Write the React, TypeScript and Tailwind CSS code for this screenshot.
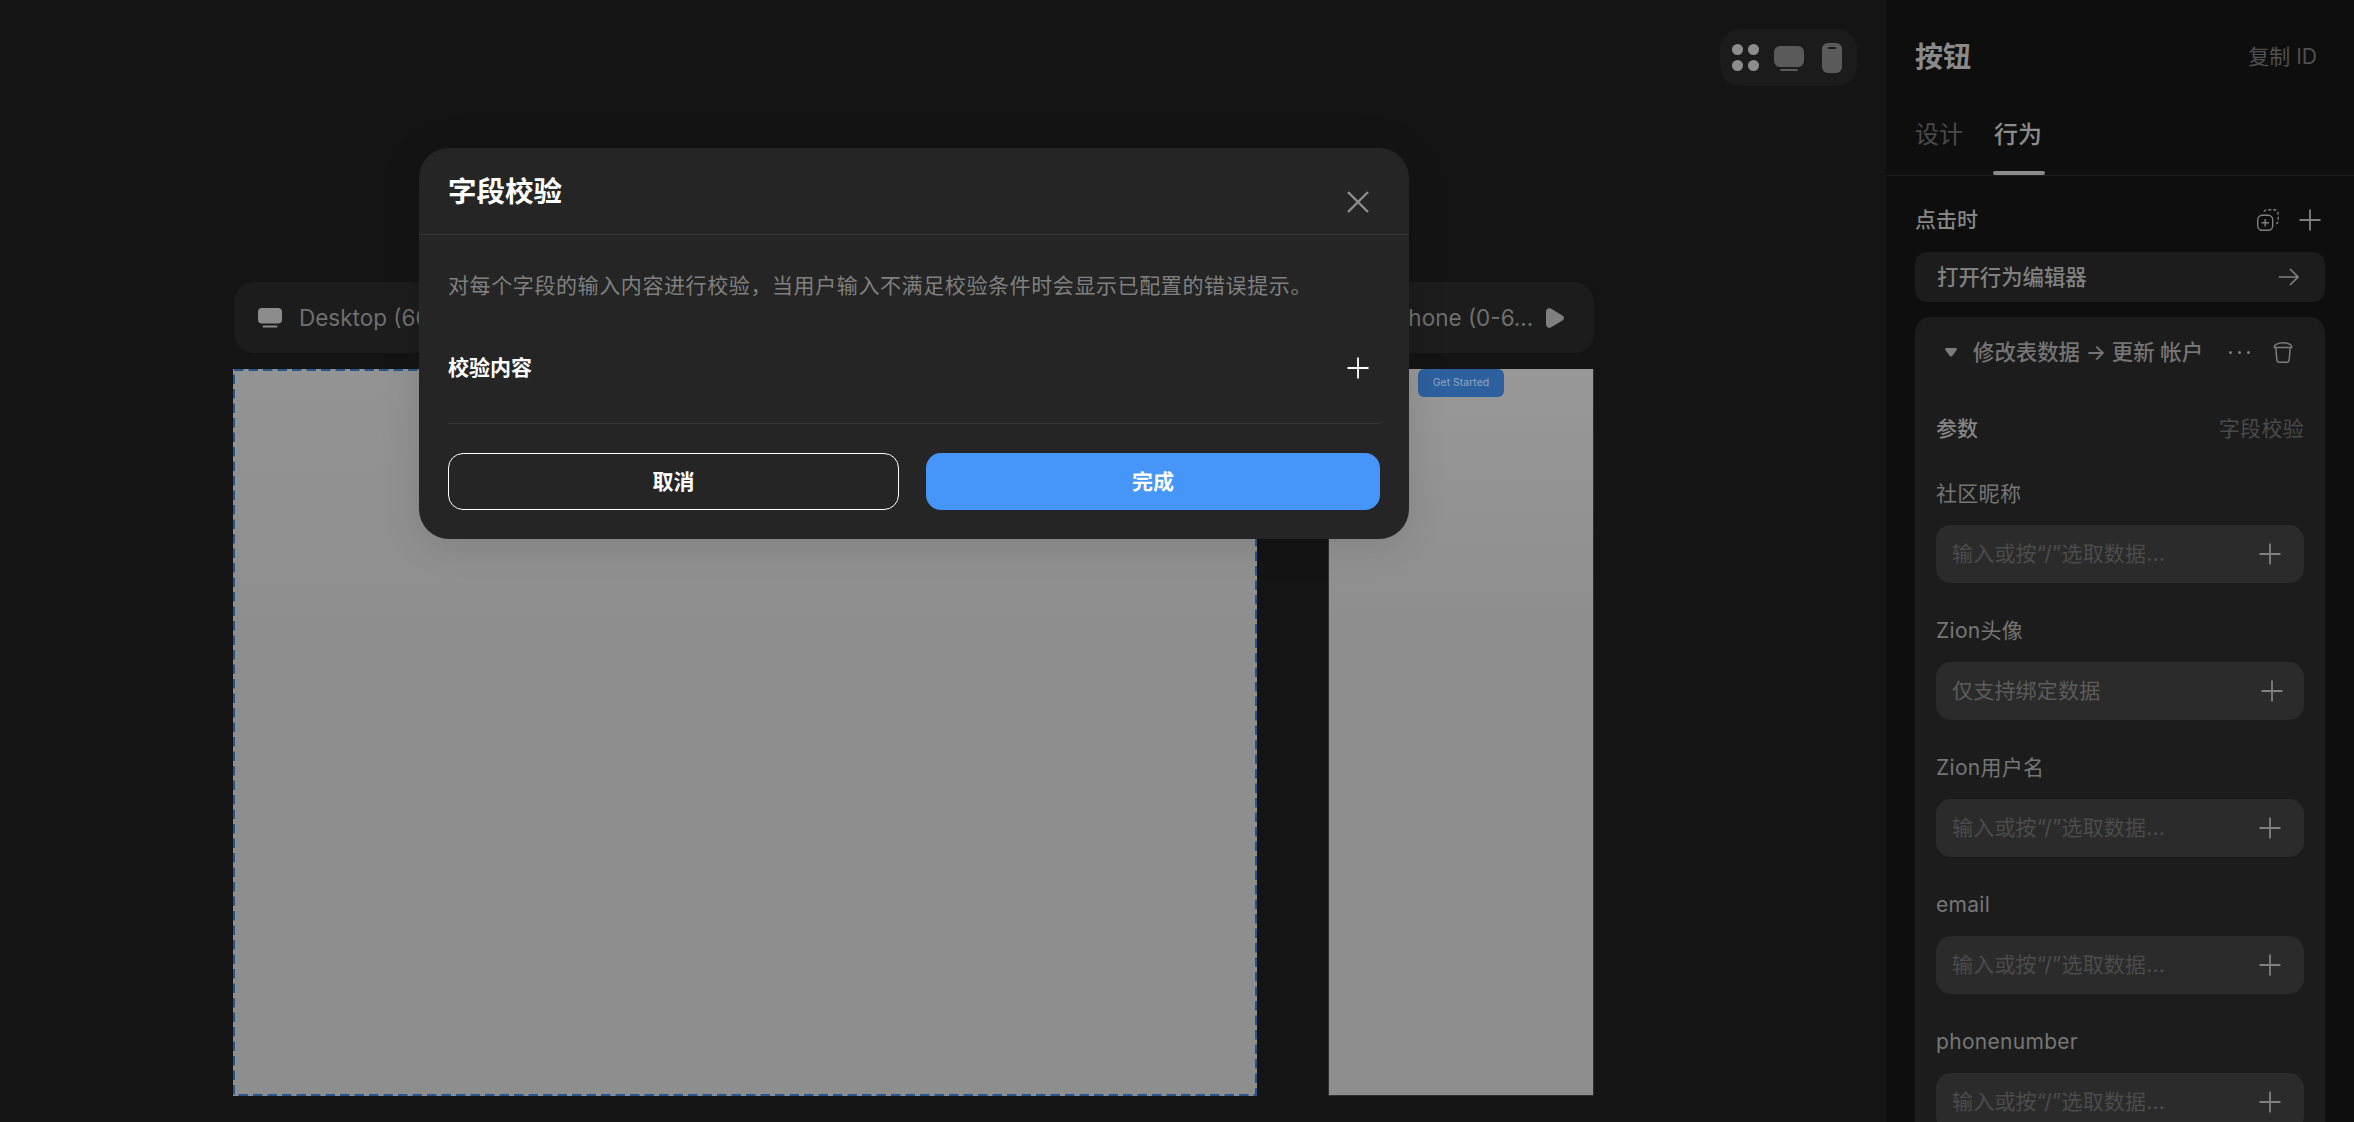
import React from 'react';

const fields = [
  { label: '社区昵称', placeholder: '输入或按“/”选取数据...', shift: false },
  { label: 'Zion头像', placeholder: '仅支持绑定数据', shift: true },
  { label: 'Zion用户名', placeholder: '输入或按“/”选取数据...', shift: false },
  { label: 'email', placeholder: '输入或按“/”选取数据...', shift: false },
  { label: 'phonenumber', placeholder: '输入或按“/”选取数据...', shift: false },
];

const PlusIcon = ({ className }: { className: string }) => (
  <svg width="22" height="22" viewBox="0 0 22 22" fill="none" stroke="currentColor" strokeWidth="1.8" className={className}>
    <path d="M11 0.5V21.5M0.5 11H21.5" />
  </svg>
);

const MonitorIcon = () => (
  <svg width="24" height="20" viewBox="0 0 24 20" fill="#8c8c8c">
    <rect x="0" y="0" width="24" height="15.5" rx="4" />
    <rect x="4.5" y="17.5" width="15" height="2" rx="1" />
  </svg>
);

// кнопка с плюсом внутри поля параметра
const Field = ({ label, placeholder, shift }: { label: string; placeholder: string; shift: boolean }) => (
  <div className="flex flex-col">
    <div className="h-[30px] mb-4 flex items-center text-[21px] text-[#767676] tracking-[0.3px]">{label}</div>
    <div className="h-[58px] rounded-[15px] bg-[#2b2b2b] flex items-center justify-between pl-[16px]">
      <span className={shift ? 'text-[21px] tracking-[0.2px] text-[#5c5c5c]' : 'text-[21px] tracking-[0.2px] text-[#4c4c4c]'}>{placeholder}</span>
      <PlusIcon className={shift ? 'text-[#808080] mr-[21px]' : 'text-[#808080] mr-[23px]'} />
    </div>
  </div>
);

const Canvas = () => (
  <div className="flex-1 flex flex-col pt-[29px] pl-[233px] pr-[29px] overflow-hidden">
    <div className="self-end w-[137px] h-[57px] rounded-[20px] bg-[#1b1b1b] flex items-center pl-[12px]">
      <div className="grid grid-cols-2 gap-[5px]">
        <div className="w-[11px] h-[11px] rounded-full bg-[#8d8d8d]" />
        <div className="w-[11px] h-[11px] rounded-full bg-[#8d8d8d]" />
        <div className="w-[11px] h-[11px] rounded-full bg-[#8d8d8d]" />
        <div className="w-[11px] h-[11px] rounded-full bg-[#8d8d8d]" />
      </div>
      <svg width="30" height="26" viewBox="0 0 30 26" fill="#5a5a5a" className="ml-[15px] mt-[2px]">
        <rect x="0" y="0" width="30" height="21" rx="6" />
        <rect x="6" y="23" width="18" height="2" rx="1" />
      </svg>
      <svg width="20" height="30" viewBox="0 0 20 30" className="ml-[18px]">
        <rect x="0" y="0" width="20" height="30" rx="6" fill="#5a5a5a" />
        <rect x="6" y="4" width="8" height="2" rx="1" fill="#1b1b1b" />
      </svg>
    </div>

    <div className="flex gap-[71px] mt-[196px]">
      {/* десктопный фрейм */}
      <div className="w-[1024px] flex flex-col">
        <div className="h-[71px] ml-px rounded-[20px] bg-[#1c1c1c] flex items-center pl-[24px] gap-[17px] text-[22.5px] text-[#6f6f6f]">
          <MonitorIcon />
          <span>Desktop (600-1024)</span>
        </div>
        <div className="relative mt-[16px] h-[727px] bg-gradient-to-b from-[#939393] to-[#8e8e8e] to-[40%]">
          <svg width="1024" height="727" fill="none" stroke="#27568f" strokeWidth="2" strokeDasharray="9.500 5" className="absolute inset-0">
            <rect x="1" y="1" width="1022" height="725" />
          </svg>
        </div>
      </div>

      {/* мобильный фрейм */}
      <div className="w-[266px] flex flex-col">
        <div className="h-[71px] rounded-[20px] bg-[#1c1c1c] flex items-center justify-between pl-[66px] pr-[30px] text-[22.5px] text-[#6f6f6f]">
          <span>Phone (0-6…</span>
          <svg width="18" height="20" viewBox="0 0 18 20" fill="#808080">
            <path d="M0 3.5C0 1 2.5-.6 4.8.6L16 7.2c2.6 1.5 2.6 4.2 0 5.6L4.8 19.4C2.5 20.6 0 19 0 16.5Z" />
          </svg>
        </div>
        <div className="relative mt-[16px] h-[727px] border border-t-0 border-[#2e2e2e] bg-gradient-to-b from-[#989898] to-[#8e8e8e] to-[35%]">
          <div className="absolute left-[89px] top-0 w-[86px] h-[28px] rounded-[6px] bg-[#2c609e] text-[10.5px] text-[#8fa7c2] flex items-center justify-center">
            Get Started
          </div>
        </div>
      </div>
    </div>
  </div>
);

const Sidebar = () => (
  <div className="w-[468px] h-full bg-[#0e0e0e] flex flex-col overflow-hidden">
    <div className="border-b border-[#1e1e1e] h-[176px] pl-[29px] pr-[30px] flex flex-col">
      <div className="mt-[37px] h-[40px] flex items-center justify-between pr-[7px]">
        <span className="text-[28px] font-semibold text-[#8a8a8a]">按钮</span>
        <span className="text-[21px] text-[#505050]">复制 ID</span>
      </div>
      <div className="mt-[42px] flex gap-[30px] text-[24px]">
        <div className="h-[56px] w-[48px] leading-[32px] text-[#4a4a4a]">设计</div>
        <div className="h-[56px] w-[52px] flex flex-col justify-between">
          <span className="leading-[32px] pl-px font-medium text-[#8c8c8c]">行为</span>
          <div className="h-[4px] rounded-full bg-[#8a8a8a]" />
        </div>
      </div>
    </div>

    <div className="px-[29px] flex flex-col">
      <div className="mt-[30px] h-[28px] flex items-center justify-between">
        <span className="text-[21px] font-medium text-[#858585]">点击时</span>
        <div className="flex items-center gap-[20px] text-[#808080]">
          <svg width="22" height="22" viewBox="0 0 22 22" fill="none" stroke="currentColor" strokeWidth="1.4">
            <rect x="0.7" y="6.2" width="15" height="15" rx="4.5" />
            <path d="M8.2 10v7.4M4.5 13.7h7.4" />
            <path d="M7 2.8C7.6 1.5 8.8.8 10.2.8h7c2.2 0 4 1.800 4 4v6.800c0 1.500-.8 2.700-2 3.300" strokeDasharray="3 2" />
          </svg>
          <PlusIcon className="text-[#808080] mr-[4px]" />
        </div>
      </div>

      <div className="mt-[18px] h-[50px] rounded-[12px] bg-[#1c1c1c] flex items-center justify-between pl-[22px] pr-[26px]">
        <span className="text-[21.4px] font-medium text-[#808080]">打开行为编辑器</span>
        <svg width="20" height="18" viewBox="0 0 20 18" fill="none" stroke="#808080" strokeWidth="1.7">
          <path d="M0 9H19M11 1l8 8-8 8" />
        </svg>
      </div>

      <div className="mt-[15px] rounded-t-[15px] bg-[#1c1c1c] px-[21px] pt-[20px] pb-[40px]">
        <div className="h-[30px] flex items-center pl-[9px]">
          <svg width="12" height="9" viewBox="0 0 12 9" fill="#7c7c7c">
            <path d="M1.500 0h9c1.200 0 1.800 1.300 1 2.200L7.200 8c-.7.800-1.700.800-2.400 0L.5 2.200C-.3 1.300.3 0 1.500 0Z" />
          </svg>
          <span className="ml-[16px] text-[21.4px] font-medium text-[#757575] whitespace-nowrap">修改表数据 → 更新 帐户</span>
          <div className="ml-[26px] flex gap-[6px]">
            <div className="w-[3px] h-[3px] rounded-full bg-[#7c7c7c]" />
            <div className="w-[3px] h-[3px] rounded-full bg-[#7c7c7c]" />
            <div className="w-[3px] h-[3px] rounded-full bg-[#7c7c7c]" />
          </div>
          <svg width="20" height="21" viewBox="0 0 20 21" fill="none" stroke="#7c7c7c" strokeWidth="1.5" className="ml-[23px]">
            <path d="M1 5.500C1 3 5 .8 10 .8s9 2.200 9 4.700" />
            <path d="M1 5.500h18M2.800 5.500l1 12c.1 1.500 1.100 2.700 2.700 2.700h7c1.600 0 2.600-1.200 2.700-2.700l1-12" />
          </svg>
        </div>

        <div className="mt-[47px] h-[30px] flex items-center justify-between">
          <span className="text-[21px] font-medium text-[#858585]">参数</span>
          <span className="text-[21px] tracking-[0.3px] text-[#4a4a4a]">字段校验</span>
        </div>

        <div className="mt-[35px] flex flex-col gap-[33px]">
          {fields.map(f => (
            <Field key={f.label} label={f.label} placeholder={f.placeholder} shift={f.shift} />
          ))}
        </div>
      </div>
    </div>
  </div>
);

const ValidationDialog = () => (
  <div className="absolute left-[419px] top-[148px] w-[990px] h-[391px] rounded-[30px] bg-[#252525] shadow-[0_4px_40px_rgba(0,0,0,0.12)] flex flex-col">
    <div className="h-[87px] border-b border-[#353535] flex justify-between pl-[29px] pr-[40px]">
      <span className="mt-[22px] h-[44px] leading-[44px] text-[28.5px] font-semibold text-white">字段校验</span>
      <svg width="22" height="22" viewBox="0 0 22 22" fill="none" stroke="#8f8f8f" strokeWidth="2.4" className="mt-[43px]">
        <path d="M1 1L21 21M21 1L1 21" />
      </svg>
    </div>
    <div className="px-[29px] flex flex-col">
      <p className="mt-[35px] h-[32px] leading-[32px] text-[21px] tracking-[0.6px] text-[#808080] whitespace-nowrap">
        对每个字段的输入内容进行校验，当用户输入不满足校验条件时会显示已配置的错误提示。
      </p>
      <div className="mt-[50px] h-[32px] flex items-center justify-between pr-[11px]">
        <span className="text-[21px] font-semibold text-white">校验内容</span>
        <PlusIcon className="text-white" />
      </div>
      <div className="mt-[39px] h-px bg-[#353535]" />
      <div className="mt-[29px] flex gap-[27px]">
        <button className="w-[451px] h-[57px] rounded-[15px] border-[1.5px] border-white text-[21px] font-semibold text-white">取消</button>
        <button className="w-[454px] h-[57px] rounded-[15px] bg-[#4596f8] text-[21px] font-semibold text-white">完成</button>
      </div>
    </div>
  </div>
);

export default function App() {
  return (
    <div className="relative w-[2354px] h-[1122px] bg-[#141414] flex overflow-hidden font-['Inter','Noto_Sans_CJK_SC',sans-serif]">
      <Canvas />
      <Sidebar />
      <ValidationDialog />
    </div>
  );
}
